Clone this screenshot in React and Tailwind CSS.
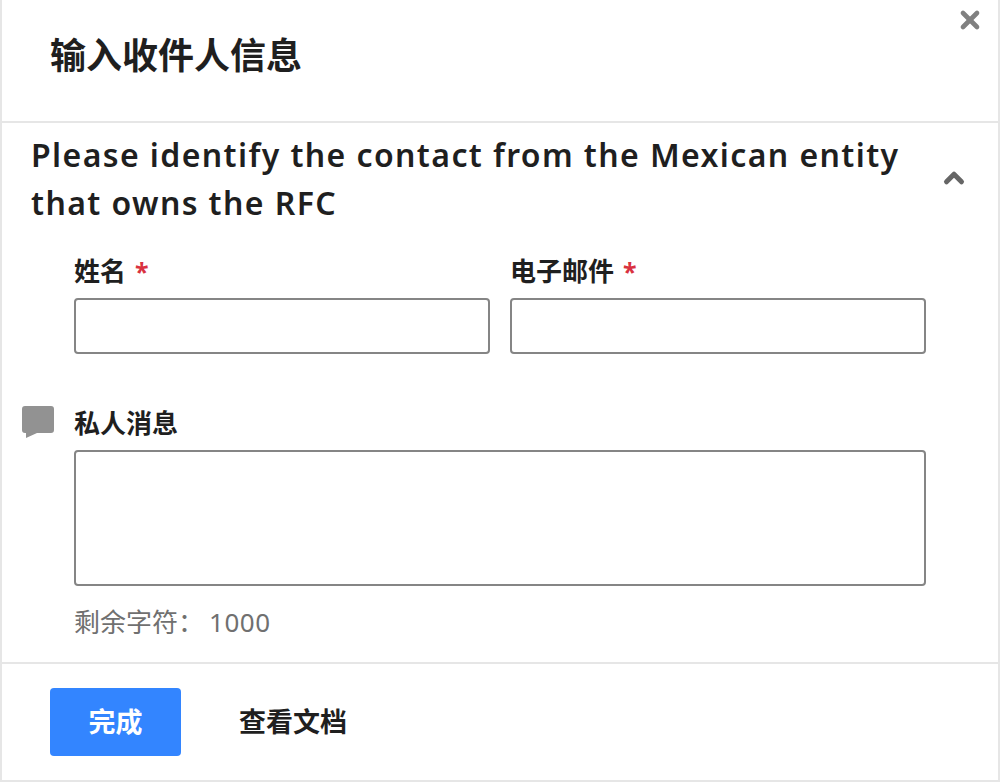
import React from 'react';
import { X, ChevronUp } from 'lucide-react';

const cjk = "font-['Noto_Sans','Noto_Sans_CJK_SC',sans-serif]";

const Label = ({ children, required }) => (
  <label className="flex h-[24px] items-center pb-[2px] text-[26px] font-bold leading-[24px] text-[#1f1f1f]">
    {children}
    {required && <span className="ml-[9px] text-[25px] font-bold text-[#d93240]">*</span>}
  </label>
);

export default function App() {
  return (
    <div className={`${cjk} flex h-[782px] w-[1000px] flex-col border-x-2 border-b-2 border-[#e6e6e6] bg-white`}>
      {/* Header */}
      <div className="relative flex h-[123px] shrink-0 items-center border-b-2 border-[#e6e6e6] pb-[10px] pl-[48px]">
        <h1 className="text-[36px] font-bold leading-[40px] text-[#1f1f1f]">输入收件人信息</h1>
        <button type="button" className="absolute right-[14px] top-[6px] text-[#808080]">
          <X size={28} strokeWidth={4} />
        </button>
      </div>

      {/* Body */}
      <div className="flex min-h-0 flex-1 flex-col">
        <div className="flex items-center pl-[29px] pr-[29px] pt-[8px]">
          <h2 className="w-[879px] text-[32px] font-semibold leading-[48px] tracking-[1.4px] text-[#1f1f1f]">
            Please identify the contact from the Mexican entity that owns the RFC
          </h2>
          <ChevronUp size={30} strokeWidth={4} className="ml-auto mt-[-2px] text-[#666666]" />
        </div>

        <div className="mt-[33px] grid grid-cols-2 gap-x-[20px] pl-[72px] pr-[72px]">
          <div className="flex flex-col gap-[14px]">
            <Label required>姓名</Label>
            <input className="h-[56px] rounded-[4px] border-2 border-[#858585] bg-white" />
          </div>
          <div className="flex flex-col gap-[14px]">
            <Label required>电子邮件</Label>
            <input className="h-[56px] rounded-[4px] border-2 border-[#858585] bg-white" />
          </div>
        </div>

        <div className="relative mt-[58px] flex flex-col gap-[14px] pl-[72px] pr-[72px]">
          <svg viewBox="0 0 32 32" className="absolute left-[20px] top-[-6px] h-[32px] w-[32px] fill-[#929292]">
            <path d="M3 0h26a3 3 0 0 1 3 3v21a3 3 0 0 1-3 3H15L4 32v-5H3a3 3 0 0 1-3-3V3a3 3 0 0 1 3-3z" />
          </svg>
          <Label>私人消息</Label>
          <textarea className="h-[136px] resize-none rounded-[4px] border-2 border-[#858585] bg-white" />
          <p className="mt-[6px] text-[26px] leading-[32px] text-[#707070]">
            剩余字符：<span className="ml-[5px] tracking-[0.5px]">1000</span>
          </p>
        </div>
      </div>

      {/* Footer */}
      <div className="flex h-[118px] shrink-0 items-start border-t-2 border-[#e6e6e6] pl-[48px] pt-[24px]">
        <button type="button" className="h-[68px] w-[131px] rounded-[4px] bg-[#3385ff] text-[27px] font-bold text-white">
          完成
        </button>
        <button type="button" className="ml-[58px] h-[68px] text-[27px] font-bold text-[#1f1f1f]">
          查看文档
        </button>
      </div>
    </div>
  );
}
